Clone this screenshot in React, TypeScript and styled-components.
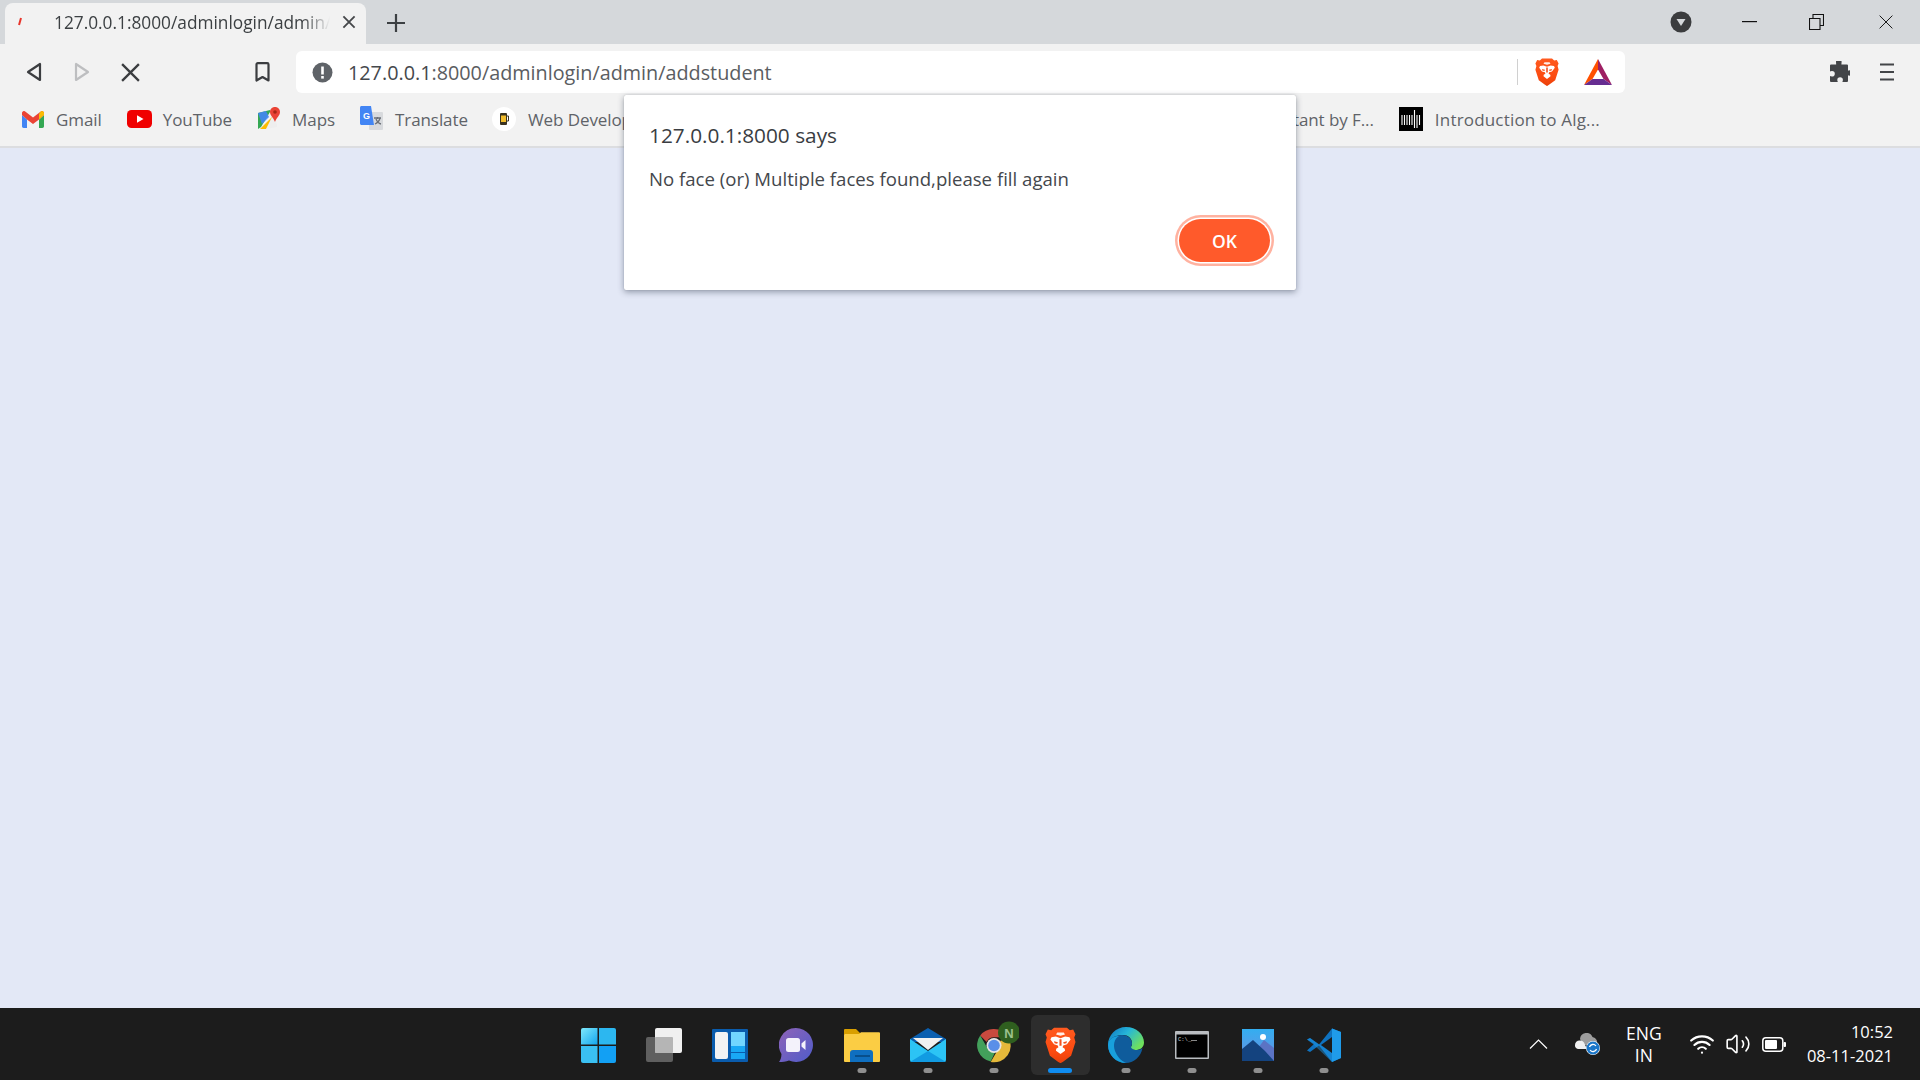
import styled, { createGlobalStyle } from "styled-components";
import { Volume2, Wifi } from "lucide-react";

const GlobalStyle = createGlobalStyle`
  html, body {
    margin: 0;
    padding: 0;
    height: 100%;
    overflow: hidden;
  }
  * {
    box-sizing: border-box;
  }
  body {
    font-family: "Open Sans", "Noto Sans", "Liberation Sans", sans-serif;
  }
`;

const Screen = styled.div`
  position: relative;
  width: 1920px;
  height: 1080px;
  display: flex;
  flex-direction: column;
  background: #e3e8f6;
`;

/* browser chrome */

const TabStrip = styled.div`
  height: 44px;
  flex: none;
  display: flex;
  align-items: flex-end;
  padding-left: 5px;
  background: #d5d8db;
`;

const Tab = styled.div`
  width: 361px;
  height: 41px;
  display: flex;
  align-items: center;
  padding: 0 10px 3px 12px;
  background: #f2f2f2;
  border-radius: 8px 8px 0 0;
`;

const TabTitle = styled.div`
  width: 276px;
  margin-left: 31px;
  overflow: hidden;
  white-space: nowrap;
  font-size: 17.3px;
  color: #3c4043;
  -webkit-mask-image: linear-gradient(to right, #000 90%, transparent 100%);
  mask-image: linear-gradient(to right, #000 90%, transparent 100%);
`;

const TabClose = styled.div`
  margin-left: auto;
  display: flex;
`;

const NewTab = styled.div`
  margin: 0 0 12px 21px;
  display: flex;
`;

const WindowControls = styled.div`
  margin-left: auto;
  height: 44px;
  display: flex;
  align-items: center;
`;

const WindowButton = styled.div<{ $width: number }>`
  width: ${(p) => p.$width}px;
  display: flex;
  justify-content: center;
`;

const Toolbar = styled.div`
  height: 50px;
  flex: none;
  display: flex;
  align-items: center;
  padding: 6px 11px 0 10px;
  background: #f2f2f2;
`;

const NavButton = styled.div<{ $offset?: number }>`
  width: 48px;
  flex: none;
  display: flex;
  justify-content: center;
  margin-left: ${(p) => p.$offset ?? 0}px;
`;

const AddressBar = styled.div`
  width: 1329px;
  height: 42px;
  flex: none;
  margin-left: 10px;
  display: flex;
  align-items: center;
  padding: 0 13px 0 16px;
  background: #ffffff;
  border-radius: 6px;
`;

const UrlText = styled.div`
  margin-left: 15px;
  font-size: 19.8px;
  color: #5a5d61;
  white-space: nowrap;
  span {
    color: #45484c;
  }
`;

const AddressDivider = styled.div`
  width: 1px;
  height: 26px;
  margin-left: auto;
  background: #d0d0d0;
`;

const AddressIcon = styled.div<{ $gap: number }>`
  margin-left: ${(p) => p.$gap}px;
  display: flex;
`;

const ToolbarEnd = styled.div`
  margin-left: auto;
  display: flex;
  align-items: center;
  gap: 29px;
  padding-right: 14px;
`;

const BookmarksBar = styled.div`
  height: 54px;
  flex: none;
  display: flex;
  align-items: center;
  padding: 0 320px 2px 22px;
  background: #f2f2f2;
  border-bottom: 2px solid #dcdde0;
`;

const Bookmark = styled.div<{ $gap?: number; $auto?: boolean; $tracking?: number }>`
  display: flex;
  align-items: center;
  flex: none;
  margin-left: ${(p) => (p.$auto ? "auto" : `${p.$gap ?? 0}px`)};
  font-size: 17px;
  letter-spacing: ${(p) => p.$tracking ?? -0.08}px;
  color: #5f6368;
  white-space: nowrap;
`;

const BookmarkIcon = styled.div<{ $width: number; $gap: number }>`
  width: ${(p) => p.$width}px;
  margin-right: ${(p) => p.$gap}px;
  display: flex;
  justify-content: center;
`;

const Page = styled.main`
  flex: 1;
  background: #e3e8f6;
`;

/* alert */

const Dialog = styled.div`
  position: absolute;
  left: 624px;
  top: 95px;
  width: 672px;
  height: 195px;
  padding: 26px 26px 0 25px;
  background: #ffffff;
  border-radius: 2px;
  box-shadow: 0 2px 6px rgba(40, 50, 70, 0.45), 0 0 1px rgba(0, 0, 0, 0.25);
`;

const DialogTitle = styled.div`
  font-size: 20.8px;
  line-height: 28px;
  color: #3a3d42;
`;

const DialogMessage = styled.div`
  margin-top: 18px;
  font-size: 18.6px;
  line-height: 24px;
  color: #44474c;
`;

const DialogActions = styled.div`
  margin-top: 28px;
  display: flex;
  justify-content: flex-end;
`;

const OkButton = styled.button`
  width: 91px;
  height: 43px;
  padding: 0;
  border: none;
  border-radius: 22px;
  background: #ff5a2b;
  color: #ffffff;
  font-family: inherit;
  font-size: 17.5px;
  font-weight: 600;
  box-shadow: 0 0 0 1.5px #ffffff, 0 0 0 4px #ffb2a0;
`;

/* taskbar */

const Taskbar = styled.footer`
  height: 72px;
  flex: none;
  display: grid;
  grid-template-columns: 1fr auto 1fr;
  align-items: center;
  background: #1c1c1c;
`;

const TaskIcons = styled.div`
  grid-column: 2;
  display: flex;
  padding-left: 2px;
`;

const TaskCell = styled.div`
  width: 66px;
  height: 72px;
  display: flex;
  align-items: center;
  justify-content: center;
  padding-top: 2px;
`;

const TaskTile = styled.div<{ $active?: boolean }>`
  position: relative;
  width: 59px;
  height: 60px;
  display: flex;
  align-items: center;
  justify-content: center;
  border-radius: 6px;
  background: ${(p) => (p.$active ? "#2d2d2d" : "transparent")};
`;

const RunDot = styled.div<{ $active?: boolean }>`
  position: absolute;
  left: 50%;
  bottom: 2px;
  width: ${(p) => (p.$active ? 24 : 9)}px;
  height: 5px;
  transform: translateX(-50%);
  border-radius: 3px;
  background: ${(p) => (p.$active ? "#0f8cf0" : "#8f8f8f")};
`;

const Tray = styled.div`
  grid-column: 3;
  justify-self: end;
  display: flex;
  align-items: center;
  padding-right: 27px;
  color: #ffffff;
`;

const TrayIcon = styled.div<{ $width: number; $gap?: number }>`
  width: ${(p) => p.$width}px;
  margin-left: ${(p) => p.$gap ?? 0}px;
  display: flex;
  justify-content: center;
`;

const Lang = styled.div`
  width: 60px;
  margin: 0 15px 0 13px;
  text-align: center;
  font-size: 17.5px;
  line-height: 22px;
`;

const Clock = styled.div`
  margin-left: 20px;
  text-align: right;
  font-size: 16.5px;
  line-height: 24px;
`;

/* drawings */

const Lion = ({ size = 28 }: { size?: number }) => (
  <svg width={size} height={size * 1.17} viewBox="0 0 24 28">
    <defs>
      <linearGradient id={`lion${size}`} x1="0" y1="0" x2="0" y2="1">
        <stop offset="0" stopColor="#ff5a1f" />
        <stop offset="0.7" stopColor="#fb4a10" />
        <stop offset="1" stopColor="#e8400a" />
      </linearGradient>
    </defs>
    <path
      fill={`url(#lion${size})`}
      d="M7 0.5h10l2.2 2 2.6-.6 1.8 3.6-1 2.5 1 3.6-3.4 10.6L14 26.8 12 28l-2-1.2-6.2-4.600L.4 11.600l1-3.600-1-2.500L2.200 1.900l2.600.6z"
    />
    <path
      fill="#ffffff"
      d="M12 8.600l3.600-1.200 3.400.5.800 1.800-2.800 3.700-2.900.9-.5 1.300 1.700 1.200.2 1.500-3.500 2.600-3.500-2.600.2-1.500 1.700-1.200-.5-1.300-2.900-.9L4.200 9.700 5 7.900l3.400-.5z"
    />
    <path fill="#f4511e" d="M7 11l3 .8-.6 1.200-2-.5zM17 11l-3 .8.600 1.200 2-.5zM11.200 9.500h1.600v5h-1.600z" />
    <path fill="#ffffff" d="M9.500 4.300h5l1 1.400-3.500 1-3.500-1z" opacity="0.9" />
  </svg>
);

const BatTriangle = () => (
  <svg width="28" height="26" viewBox="0 0 28 26">
    <path fill="#ff5000" d="M14 0L0 26l8.500-6L14 10.500z" />
    <path fill="#9e1f63" d="M14 0l14 26-8.500-6L14 10.500z" />
    <path fill="#662d91" d="M0 26l8.500-6h11L28 26z" />
  </svg>
);

const GmailIcon = () => (
  <svg width="22" height="17" viewBox="0 0 22 17">
    <path fill="#4285f4" d="M0 2.500V15.300C0 16.200.7 17 1.700 17H5V8.500L0 4z" />
    <path fill="#34a853" d="M17 17h3.300c1 0 1.700-.8 1.700-1.700V4l-5 4.500z" />
    <path fill="#ea4335" d="M5 8.500L0 4V2C0 .3 2-.6 3.200.4L11 6.500 18.800.4C20-.6 22 .3 22 2v2l-5 4.500-6 4.500z" />
    <path fill="#fbbc04" d="M17 8.500V2.700L18.800.4C20-.6 22 .3 22 2v2z" />
  </svg>
);

const YoutubeIcon = () => (
  <svg width="25" height="18" viewBox="0 0 25 18">
    <rect width="25" height="18" rx="4.500" fill="#f00000" />
    <path fill="#ffffff" d="M10 5.200l6.500 3.800-6.500 3.800z" />
  </svg>
);

const MapsIcon = () => (
  <svg width="24" height="24" viewBox="0 0 24 24">
    <path fill="#34a853" d="M1 6l12-3v2L4 20l-3 2z" />
    <path fill="#4285f4" d="M1 6l8-2 3 6-7 7z" opacity="0.9" />
    <path fill="#fbbc04" d="M3 22l12-12 2 5-8 7z" />
    <path fill="#eeeeee" d="M15 10l5 7v3l-11 2z" />
    <path fill="#ea4335" d="M18 0c3 0 5 2.200 5 5 0 3.500-3.500 5.500-5 10-1.500-4.500-5-6.500-5-10 0-2.800 2-5 5-5z" />
    <circle cx="18" cy="5" r="1.800" fill="#a52714" />
  </svg>
);

const TranslateIcon = () => (
  <svg width="23" height="26" viewBox="0 0 23 26">
    <rect x="9" y="6" width="14" height="18" rx="1" fill="#d8dadd" />
    <path d="M14 12h7M17.500 11v2M15 18c3-1.500 4.500-3.500 5-6M16 13c1 2.500 3 4.500 5 5" stroke="#6b7078" strokeWidth="1.300" fill="none" />
    <path fill="#4285f4" d="M1.500 0H11l3 19H1.500C.7 19 0 18.300 0 17.500V1.500C0 .7.700 0 1.500 0z" />
    <text x="6.500" y="13" fontSize="9" fontWeight="700" fill="#ffffff" textAnchor="middle" fontFamily="Liberation Sans, sans-serif">G</text>
  </svg>
);

const WebIcon = () => (
  <svg width="24" height="24" viewBox="0 0 24 24">
    <circle cx="12" cy="12" r="12" fill="#ffffff" />
    <rect x="8" y="6" width="7" height="12" rx="1" fill="#3a3320" />
    <rect x="9" y="8.500" width="5" height="6.500" fill="#f2bd2c" />
    <path d="M15 9h1.500v5H15" stroke="#3a3320" fill="none" />
  </svg>
);

const MlpIcon = () => (
  <svg width="24" height="24" viewBox="0 0 24 24">
    <rect width="24" height="24" fill="#000000" />
    <g stroke="#ffffff" strokeWidth="1.100">
      <path d="M3 8v10M5.500 8v10M8 8v10M10.500 8v10M13 8v10M15.500 3v18M18 8v13M20.500 8v10" />
    </g>
  </svg>
);

const WindowsIcon = () => (
  <svg width="35" height="35" viewBox="0 0 35 35">
    <defs>
      <linearGradient id="winA" x1="0" y1="0" x2="1" y2="1">
        <stop offset="0" stopColor="#7fe9fb" />
        <stop offset="1" stopColor="#14a6ee" />
      </linearGradient>
    </defs>
    <path fill="url(#winA)" d="M2 0h14.500v16.500H0V2a2 2 0 0 1 2-2z" />
    <path fill="#2cb7f0" d="M18 0h15a2 2 0 0 1 2 2v14.500H18z" />
    <path fill="#3ac0f2" d="M0 18h16.500v17H2a2 2 0 0 1-2-2z" />
    <path fill="#12a0f4" d="M18 18h17v15a2 2 0 0 1-2 2H18z" />
  </svg>
);

const TaskViewIcon = () => (
  <svg width="36" height="34" viewBox="0 0 36 34">
    <rect x="0" y="9" width="27" height="25" rx="2" fill="#5f5f5f" />
    <rect x="9" y="0" width="27" height="25" rx="2" fill="#f0f0f0" />
    <rect x="9" y="9" width="18" height="16" rx="1" fill="#b5b5b5" />
  </svg>
);

const WidgetsIcon = () => (
  <svg width="36" height="33" viewBox="0 0 36 33">
    <rect width="36" height="33" rx="1" fill="#0a5cad" />
    <rect x="3" y="3" width="13" height="27" rx="2" fill="#f3f3f3" />
    <rect x="19" y="3" width="14" height="14" fill="#72d6ff" />
    <rect x="19" y="17" width="14" height="6" fill="#19a8f5" />
    <rect x="19" y="24" width="14" height="6" fill="#19a8f5" />
  </svg>
);

const ChatIcon = () => (
  <svg width="34" height="34" viewBox="0 0 34 34">
    <defs>
      <linearGradient id="chatA" x1="0" y1="0" x2="1" y2="1">
        <stop offset="0" stopColor="#8f63b8" />
        <stop offset="1" stopColor="#4f5cc9" />
      </linearGradient>
    </defs>
    <path fill="url(#chatA)" d="M17 0a17 17 0 1 1-7 32.500C7 34 3 34 0 34c1.500-2 2.300-4 2.500-8A17 17 0 0 1 17 0z" />
    <rect x="7" y="10" width="14" height="14" rx="2.500" fill="#f4f2fb" />
    <path fill="#f4f2fb" d="M22.500 15.500l4-3.500v10l-4-3.500z" />
  </svg>
);

const FolderIcon = () => (
  <svg width="36" height="33" viewBox="0 0 36 33">
    <path fill="#d99f00" d="M1 0h11l4 4v6H0V1a1 1 0 0 1 1-1z" />
    <path fill="#fbcd44" d="M0 6.500c0-1 .7-1.500 1.500-1.500H15l2-1.800h18a1 1 0 0 1 1 1V32a1 1 0 0 1-1 1H1a1 1 0 0 1-1-1z" />
    <path fill="#0f6fc0" d="M6 24a3 3 0 0 1 3-3h17a3 3 0 0 1 3 3v9H6z" />
    <rect x="11" y="26" width="15" height="2" fill="#084f8c" />
  </svg>
);

const MailIcon = () => (
  <svg width="36" height="34" viewBox="0 0 36 34">
    <path fill="#0a5fb0" d="M18 0l18 11v3H0v-3z" />
    <path fill="#f1f1f1" d="M3 10h30L18 22z" />
    <path fill="#2cc4f5" d="M0 11l18 12 18-12v21a2 2 0 0 1-2 2H2a2 2 0 0 1-2-2z" />
    <path fill="#119be2" d="M0 34l18-11 18 11z" />
  </svg>
);

const ChromeIcon = () => (
  <svg width="50" height="49" viewBox="-8 -4 50 49">
    <path fill="#c84a3f" d="M17 4a16.500 16.500 0 0 1 14.300 8.200H17a8 8 0 0 0-7.400 4.900L3.200 10.500A16.500 16.500 0 0 1 17 4z" />
    <path fill="#43a05b" d="M3.200 10.500l7 12.200a8 8 0 0 0 8 4.200l-4.500 9.500A16.500 16.500 0 0 1 3.200 10.500z" />
    <path fill="#e5b93a" d="M31.300 12.200A16.500 16.500 0 0 1 13.700 36.900l7-12A8 8 0 0 0 23 16z" />
    <circle cx="17" cy="20.500" r="7.500" fill="#e6e6e6" />
    <circle cx="17" cy="20.500" r="5.800" fill="#5a8fe8" />
    <circle cx="32" cy="7.500" r="11" fill="#2f5f1f" />
    <text x="32" y="12.500" fontSize="13" fontWeight="700" textAnchor="middle" fill="#9cc28e" fontFamily="Liberation Sans, sans-serif">N</text>
  </svg>
);

const EdgeIcon = () => (
  <svg width="36" height="36" viewBox="0 0 36 36">
    <defs>
      <linearGradient id="edgeA" x1="0" y1="0" x2="1" y2="0.600">
        <stop offset="0" stopColor="#0c6fc0" />
        <stop offset="0.5" stopColor="#26b6d8" />
        <stop offset="1" stopColor="#6fe05d" />
      </linearGradient>
    </defs>
    <path fill="url(#edgeA)" d="M18 0c10.500 0 18 7.500 18 15.500 0 5-4 7.500-8.500 7.500-3 0-5-1-5-2 0-.8 1.500-1.500 1.500-4.500C24 11 20 8 15 8 8 8 1 13 0 18 0 8 8 0 18 0z" />
    <path fill="#0f5c9c" d="M0 18c0-6 7-10 14-10 6 0 10 4 10 8.500 0 1.500-1 2.500-1 3.500 0 1.500 2.500 3 5.500 3 2.500 0 5-.8 6-2C33 30 25 36 18 36 8 36 0 28 0 18z" />
    <path fill="#18a0dc" d="M0 18c0-5 5-9 11-9-5 3-6 9-4 15 2 5 6 10 11 12C8 36 0 28 0 18z" />
  </svg>
);

const TerminalIcon = () => (
  <svg width="34" height="28" viewBox="0 0 34 28">
    <rect width="34" height="28" rx="1" fill="#b9bcc0" />
    <rect x="1.500" y="3.500" width="31" height="23" fill="#000000" />
    <text x="3" y="10" fontSize="5.500" fill="#d0d0d0" fontFamily="Liberation Mono, monospace">C:\_</text>
    <rect x="16" y="9" width="6" height="1" fill="#888888" />
  </svg>
);

const PhotosIcon = () => (
  <svg width="32" height="32" viewBox="0 0 32 32">
    <defs>
      <linearGradient id="photoA" x1="0" y1="0" x2="0" y2="1">
        <stop offset="0" stopColor="#33aef0" />
        <stop offset="1" stopColor="#6d8fe0" />
      </linearGradient>
    </defs>
    <rect width="32" height="32" fill="url(#photoA)" />
    <circle cx="21" cy="8" r="3" fill="#ffffff" />
    <path fill="#5b73c4" d="M14 22l8-11 10 8v13H14z" />
    <path fill="#14437f" d="M0 20l11-9 12 11 9 10H0z" />
  </svg>
);

const VscodeIcon = () => (
  <svg width="36" height="36" viewBox="0 0 36 36">
    <path fill="#0f72bf" d="M1 12.500l3-1.500 9 6.500 13-16L35 5v26l-9 4-13-16.500-9 6.500-3-1.500 7-6.500z" />
    <path fill="#1f9bea" d="M26 1.500L35 5v26l-9 4z" />
    <path fill="#1f9bea" d="M1 12.500l3-1.500 22 15v9L8 18z" opacity="0.45" />
    <path fill="#1c1c1c" d="M26 10L15 18l11 8z" />
  </svg>
);

const CloudIcon = () => (
  <svg width="26" height="22" viewBox="0 0 26 22">
    <path fill="#9d9d9d" d="M5 6a6.500 6.500 0 0 1 12.500-2A5 5 0 0 1 21 12H8z" />
    <path fill="#f0f0f0" d="M0 12a4.500 4.500 0 0 1 4.500-4.500c.4 0 3 0 4.500 2l3 6.500H3.500A3.500 3.500 0 0 1 0 12z" />
    <circle cx="18" cy="15" r="7" fill="#ffffff" />
    <circle cx="18" cy="15" r="6.500" fill="#1a76c8" />
    <path d="M14.500 14a3.600 3.600 0 0 1 6.400-1M21.500 16a3.600 3.600 0 0 1-6.400 1" fill="none" stroke="#ffffff" strokeWidth="1.300" />
  </svg>
);

const BatteryIcon = () => (
  <svg width="24" height="15" viewBox="0 0 24 15">
    <rect x="0.800" y="0.800" width="20" height="13.400" rx="3" fill="none" stroke="#ffffff" strokeWidth="1.500" />
    <rect x="3" y="3" width="12" height="9" rx="1" fill="#ffffff" />
    <rect x="21.500" y="5" width="2.500" height="5" rx="1" fill="#ffffff" />
  </svg>
);

const ThinCross = ({ size, color, width }: { size: number; color: string; width: number }) => (
  <svg width={size} height={size} viewBox="0 0 20 20">
    <path d="M2 2l16 16M18 2L2 18" stroke={color} strokeWidth={width} fill="none" />
  </svg>
);

const taskItems = [
  { id: "start", icon: <WindowsIcon /> },
  { id: "view", icon: <TaskViewIcon /> },
  { id: "widgets", icon: <WidgetsIcon /> },
  { id: "chat", icon: <ChatIcon /> },
  { id: "files", icon: <FolderIcon />, running: true },
  { id: "mail", icon: <MailIcon />, running: true },
  { id: "chrome", icon: <ChromeIcon />, running: true },
  { id: "brave", icon: <Lion size={31} />, running: true, active: true },
  { id: "edge", icon: <EdgeIcon />, running: true },
  { id: "cmd", icon: <TerminalIcon />, running: true },
  { id: "photos", icon: <PhotosIcon />, running: true },
  { id: "code", icon: <VscodeIcon />, running: true },
];

export default function App() {
  return (
    <Screen>
      <GlobalStyle />

      <TabStrip>
        <Tab>
          <svg width="6" height="10" viewBox="0 0 6 10">
            <path d="M4 1L2 8" stroke="#e8352b" strokeWidth="2" fill="none" />
          </svg>
          <TabTitle>127.0.0.1:8000/adminlogin/admin/addstudent</TabTitle>
          <TabClose>
            <ThinCross size={14} color="#45474a" width={2.600} />
          </TabClose>
        </Tab>
        <NewTab>
          <svg width="18" height="18" viewBox="0 0 18 18">
            <path d="M9 0v18M0 9h18" stroke="#3c4043" strokeWidth="2.200" />
          </svg>
        </NewTab>
        <WindowControls>
          <WindowButton $width={74}>
            <svg width="22" height="22" viewBox="0 0 22 22">
              <circle cx="11" cy="11" r="10.500" fill="#3b3c3e" />
              <path d="M6.500 8h9L11 15z" fill="#d5d8db" />
            </svg>
          </WindowButton>
          <WindowButton $width={62}>
            <svg width="15" height="2" viewBox="0 0 15 2">
              <rect width="15" height="1.200" fill="#111111" />
            </svg>
          </WindowButton>
          <WindowButton $width={72}>
            <svg width="15" height="16" viewBox="0 0 15 16">
              <path d="M.5 4.500h10.500v11H.5zM4 4V.5h10.500v11H11" fill="none" stroke="#111111" strokeWidth="1.100" />
            </svg>
          </WindowButton>
          <WindowButton $width={68}>
            <ThinCross size={16} color="#111111" width={1.200} />
          </WindowButton>
        </WindowControls>
      </TabStrip>

      <Toolbar>
        <NavButton>
          <svg width="16" height="20" viewBox="0 0 16 20">
            <path d="M14 2v16L2 10z" fill="none" stroke="#3b3d40" strokeWidth="2.200" strokeLinejoin="round" />
          </svg>
        </NavButton>
        <NavButton>
          <svg width="16" height="20" viewBox="0 0 16 20">
            <path d="M2 2v16l12-8z" fill="none" stroke="#bdbec0" strokeWidth="2.200" strokeLinejoin="round" />
          </svg>
        </NavButton>
        <NavButton>
          <ThinCross size={21} color="#3b3d40" width={2.200} />
        </NavButton>
        <NavButton $offset={84}>
          <svg width="15" height="20" viewBox="0 0 15 20">
            <path d="M1.500 2.500a1.300 1.300 0 0 1 1.300-1.300h9.400a1.300 1.300 0 0 1 1.300 1.300v16L7.500 15l-6 3.500z" fill="none" stroke="#3b3d40" strokeWidth="2.200" strokeLinejoin="round" />
          </svg>
        </NavButton>
        <AddressBar>
          <svg width="21" height="21" viewBox="0 0 21 21">
            <circle cx="10.500" cy="10.500" r="10" fill="#5f6368" />
            <rect x="9.200" y="4.500" width="2.600" height="8" fill="#ffffff" />
            <rect x="9.200" y="14" width="2.600" height="2.600" fill="#ffffff" />
          </svg>
          <UrlText>
            <span>127.0.0.1</span>:8000/adminlogin/admin/addstudent
          </UrlText>
          <AddressDivider />
          <AddressIcon $gap={17}>
            <Lion size={24} />
          </AddressIcon>
          <AddressIcon $gap={25}>
            <BatTriangle />
          </AddressIcon>
        </AddressBar>
        <ToolbarEnd>
          <svg width="22" height="22" viewBox="0 0 22 22">
            <path fill="#434548" d="M8 1a2.800 2.800 0 0 1 5.600 0c0 .7-.2 1.500-.2 2.500H19a1 1 0 0 1 1 1v5.200c1-.3 1.400-.5 2-.5a2.800 2.800 0 0 1 0 5.600c-.6 0-1-.2-2-.5V20a1 1 0 0 1-1 1h-4.600c.3-1 .5-1.400.5-2a2.800 2.800 0 0 0-5.600 0c0 .6.200 1 .5 2H3a1 1 0 0 1-1-1v-5c1 .3 1.400.5 2 .5a2.800 2.800 0 0 0 0-5.600c-.6 0-1 .2-2 .5V4.500a1 1 0 0 1 1-1h5.200C8.200 2.500 8 1.700 8 1z" />
          </svg>
          <svg width="16" height="20" viewBox="0 0 16 20">
            <path d="M1 2.500h14M1 10h14M1 17.500h14" stroke="#434548" strokeWidth="2.200" />
          </svg>
        </ToolbarEnd>
      </Toolbar>

      <BookmarksBar>
        <Bookmark>
          <BookmarkIcon $width={22} $gap={12}><GmailIcon /></BookmarkIcon>Gmail
        </Bookmark>
        <Bookmark $gap={25}>
          <BookmarkIcon $width={25} $gap={11}><YoutubeIcon /></BookmarkIcon>YouTube
        </Bookmark>
        <Bookmark $gap={25}>
          <BookmarkIcon $width={24} $gap={11}><MapsIcon /></BookmarkIcon>Maps
        </Bookmark>
        <Bookmark $gap={25}>
          <BookmarkIcon $width={23} $gap={12}><TranslateIcon /></BookmarkIcon>Translate
        </Bookmark>
        <Bookmark $gap={24}>
          <BookmarkIcon $width={24} $gap={12}><WebIcon /></BookmarkIcon>Web Developer
        </Bookmark>
        <Bookmark $auto>Assistant by F...</Bookmark>
        <Bookmark $gap={25} $tracking={0.18}>
          <BookmarkIcon $width={24} $gap={12}><MlpIcon /></BookmarkIcon>Introduction to Alg...
        </Bookmark>
      </BookmarksBar>

      <Page />

      <Dialog>
        <DialogTitle>127.0.0.1:8000 says</DialogTitle>
        <DialogMessage>No face (or) Multiple faces found,please fill again</DialogMessage>
        <DialogActions>
          <OkButton>OK</OkButton>
        </DialogActions>
      </Dialog>

      <Taskbar>
        <TaskIcons>
          {taskItems.map((item) => (
            <TaskCell key={item.id}>
              <TaskTile $active={item.active}>
                {item.icon}
                {item.running && <RunDot $active={item.active} />}
              </TaskTile>
            </TaskCell>
          ))}
        </TaskIcons>
        <Tray>
          <TrayIcon $width={20}>
            <svg width="19" height="10" viewBox="0 0 19 10">
              <path d="M1 9.500L9.500 1 18 9.500" fill="none" stroke="#ffffff" strokeWidth="1.200" />
            </svg>
          </TrayIcon>
          <TrayIcon $width={26} $gap={26}>
            <CloudIcon />
          </TrayIcon>
          <Lang>
            ENG
            <br />
            IN
          </Lang>
          <TrayIcon $width={26}>
            <Wifi size={26} strokeWidth={2} />
          </TrayIcon>
          <TrayIcon $width={26} $gap={10}>
            <Volume2 size={26} strokeWidth={1.500} />
          </TrayIcon>
          <TrayIcon $width={26} $gap={10}>
            <BatteryIcon />
          </TrayIcon>
          <Clock>
            10:52
            <br />
            08-11-2021
          </Clock>
        </Tray>
      </Taskbar>
    </Screen>
  );
}
